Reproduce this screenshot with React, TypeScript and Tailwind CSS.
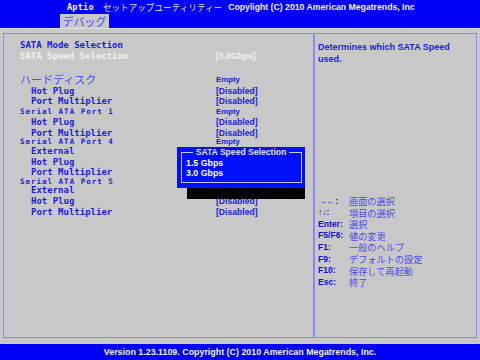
import React from 'react';

type Row = {
  label: string;
  kind: 'title' | 'gray' | 'jp' | 'item' | 'port' | 'blank';
  value?: string;
  h: string;
};

// values hidden under the popup and its shadow are left out
const rows: Row[] = [
  { label: 'SATA Mode Selection', kind: 'title', h: 'h-[11px]' },
  { label: 'SATA Speed Selection', kind: 'gray', value: '[3.0Gbps]', h: 'h-[10px]' },
  { label: '', kind: 'blank', h: 'h-[12px]' },
  { label: 'ハードディスク', kind: 'jp', value: 'Empty', h: 'h-[13px]' },
  { label: 'Hot Plug', kind: 'item', value: '[Disabled]', h: 'h-[10px]' },
  { label: 'Port Multiplier', kind: 'item', value: '[Disabled]', h: 'h-[11px]' },
  { label: 'Serial ATA Port 1', kind: 'port', value: 'Empty', h: 'h-[9px]' },
  { label: 'Hot Plug', kind: 'item', value: '[Disabled]', h: 'h-[12px]' },
  { label: 'Port Multiplier', kind: 'item', value: '[Disabled]', h: 'h-[10px]' },
  { label: 'Serial ATA Port 4', kind: 'port', value: 'Empty', h: 'h-[8px]' },
  { label: 'External', kind: 'item', h: 'h-[11px]' },
  { label: 'Hot Plug', kind: 'item', h: 'h-[10px]' },
  { label: 'Port Multiplier', kind: 'item', h: 'h-[11px]' },
  { label: 'Serial ATA Port 5', kind: 'port', h: 'h-[7px]' },
  { label: 'External', kind: 'item', h: 'h-[11px]' },
  { label: 'Hot Plug', kind: 'item', value: '[Disabled]', h: 'h-[10px]' },
  { label: 'Port Multiplier', kind: 'item', value: '[Disabled]', h: 'h-[12px]' },
];

const help = [
  ['→←:', '画面の選択'],
  ['↑↓:', '項目の選択'],
  ['Enter:', '選択'],
  ['F5/F6:', '値の変更'],
  ['F1:', '一般のヘルプ'],
  ['F9:', 'デフォルトの設定'],
  ['F10:', '保存して再起動'],
  ['Esc:', '終了'],
];

const mono = "font-['DejaVu_Sans_Mono',monospace] font-bold";
const narrow = "font-['Liberation_Sans',sans-serif] font-bold";
const jp = "font-['Noto_Sans_CJK_JP',sans-serif]";

function Label({ row }: { row: Row }) {
  if (row.kind === 'title')
    return <span className={`${mono} text-[9px] text-[#1a1ae0]`}>{row.label}</span>;
  if (row.kind === 'gray')
    return <span className={`${mono} text-[9px] text-[#f2f2f2]`}>{row.label}</span>;
  if (row.kind === 'jp')
    return <span className={`${jp} text-[11px] text-[#4c4cec]`}>{row.label}</span>;
  if (row.kind === 'port')
    return <span className={`${mono} text-[7.5px] tracking-[1px] text-[#1a1ae0]`}>{row.label}</span>;
  if (row.kind === 'item')
    return <span className={`${mono} text-[9px] text-[#1a1ae0] pl-[11px]`}>{row.label}</span>;
  return null;
}

export default function App() {
  return (
    <div className="w-[480px] h-[360px] bg-[#c8c8c8] flex flex-col overflow-hidden">
      <div className="h-[28px] bg-[#0000f8] flex flex-col">
        <div className="h-[14px] flex items-center pl-[67px] gap-[9px] leading-none">
          <span className={`${mono} text-[8.6px] tracking-[0.2px] text-[#f4f4f4]`}>Aptio</span>
          <span className={`${jp} text-[8.6px] text-[#e0e0f4]`}>セットアップユーティリティー</span>
          <span className={`${narrow} text-[8.7px] text-[#f4f4f4] -ml-[3px]`}>Copylight (C) 2010 American Megatrends, Inc</span>
        </div>
        <div className="h-[14px] flex">
          <div className={`ml-[60px] w-[49px] bg-[#c8c8c8] flex items-center justify-center ${jp} text-[11px] leading-none text-[#4646f0]`}>
            デバッグ
          </div>
        </div>
      </div>

      <div className="flex-1 border-t border-[#e2e2e2] px-[3px] pt-[4px] pb-[6px] flex">
        <div className="flex-1 border border-[#8a8af2] flex relative">
          <div className="w-[309px] pt-[6px] pl-[16px] flex flex-col">
            {rows.map((row, i) => (
              <div key={i} className={`${row.h} flex items-center leading-none`}>
                <div className="w-[196px] flex items-center">
                  <Label row={row} />
                </div>
                {row.value && (
                  <span
                    className={`${narrow} ${row.value === 'Empty' ? 'text-[7.8px]' : 'text-[8.6px]'} ${row.kind === 'gray' ? 'text-[#f2f2f2]' : 'text-[#1a1ae0]'}`}
                  >
                    {row.value}
                  </span>
                )}
              </div>
            ))}
          </div>
          <div className="w-[2px] bg-[#8a8af2]" />
          <div className="flex-1 pt-[8px] pl-[3px] flex flex-col">
            <div className={`${narrow} text-[9px] leading-[11.6px] text-[#1a1ae0]`}>
              <div>Determines which SATA Speed</div>
              <div>used.</div>
            </div>
            <div className="mt-[130px] flex flex-col">
              {help.map(([k, d]) => (
                <div key={k} className="h-[11.6px] flex items-center leading-none">
                  <span className={`${narrow} w-[31px] text-[8.6px] text-[#1010d8]`}>{k}</span>
                  <span className={`${jp} text-[9.2px] leading-[10px] text-[#4a4aea]`}>{d}</span>
                </div>
              ))}
            </div>
          </div>

          <div className="absolute left-[183px] top-[126px] w-[118px] h-[39px] bg-black" />
          <div className="absolute left-[173px] top-[113px] w-[128px] h-[41px] bg-[#0010f8]">
            <div className="absolute left-[4px] top-[5px] right-[3px] bottom-[5px] border border-[#c8c8f8]" />
            <div className="absolute left-0 right-0 top-[1px] flex justify-center">
              <span className={`${narrow} text-[8.6px] leading-[9px] px-[3px] bg-[#0010f8] text-[#e0e0f4]`}>SATA Speed Selection</span>
            </div>
            <div className={`absolute left-[9px] top-[11px] ${narrow} text-[8.8px] leading-[10px] text-white`}>
              <div>1.5 Gbps</div>
              <div>3.0 Gbps</div>
            </div>
          </div>
        </div>
      </div>

      <div className="h-[16px] bg-[#0000f8] flex items-center justify-center">
        <span className={`${narrow} text-[8.9px] leading-none text-[#f4f4f4]`}>
          Version 1.23.1109. Copyright (C) 2010 American Megatrends, Inc.
        </span>
      </div>
    </div>
  );
}
